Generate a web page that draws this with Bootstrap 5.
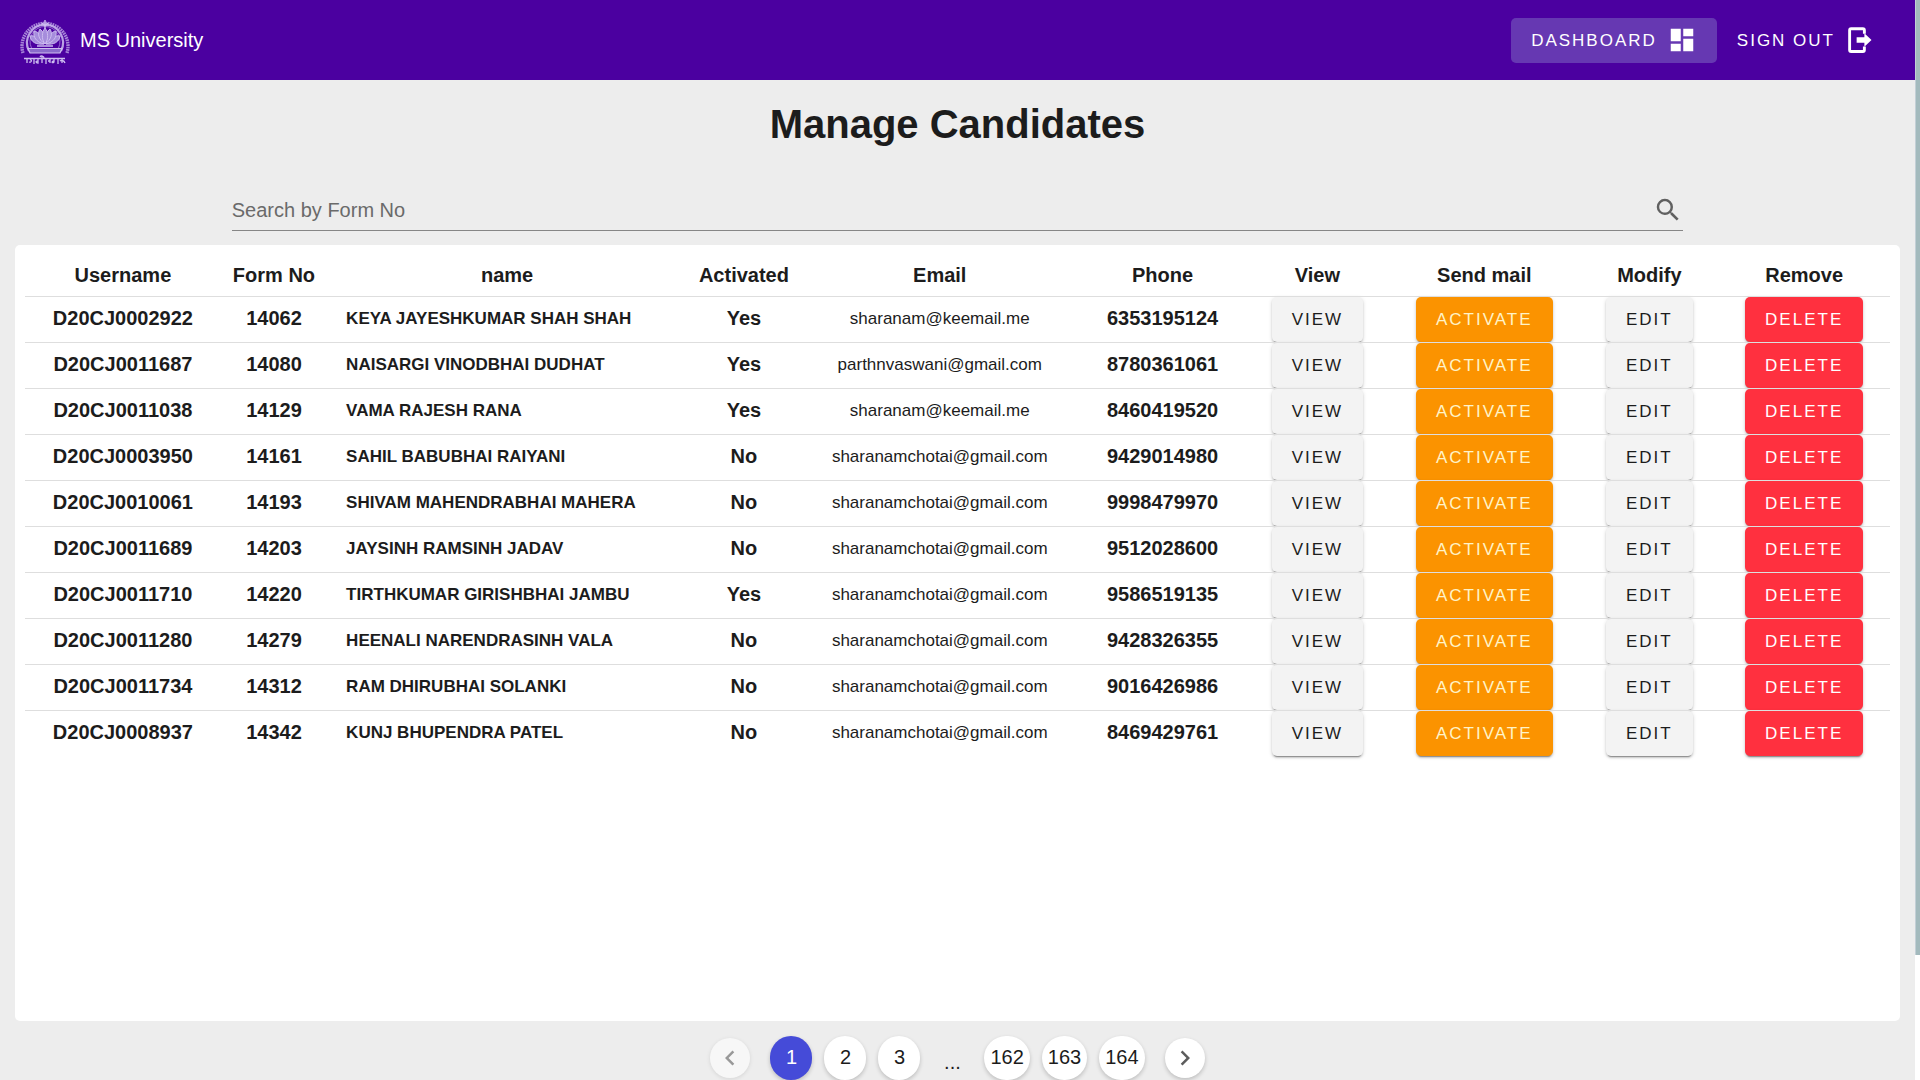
<!DOCTYPE html>
<html lang="en">
<head>
<meta charset="utf-8">
<meta name="viewport" content="width=device-width, initial-scale=1">
<title>Manage Candidates</title>
<link href="https://cdn.jsdelivr.net/npm/bootstrap@5.3.0/dist/css/bootstrap.min.css" rel="stylesheet">
<style>
  body { font-family: "Liberation Sans", Arial, sans-serif; font-size: 20px; color: #1c1c1c; background: #ededed; }
  .page-scroll { height: 100vh; overflow-y: auto; scrollbar-width: none; padding-right: 5px; }
  .page-scroll::-webkit-scrollbar { display: none; }
  .scroll-rail { position: fixed; top: 0; right: 0; width: 5px; height: 100vh; background: #fff; }
  .scroll-thumb { background: #a3babd; border-left: 1px solid #c3cfd6; }
  .topbar { height: 80px; background: #4b00a0; padding: 0 20px; }
  .topbar, .topbar a { color: #fff; }
  .brand-link { gap: 10px; }
  .brand-logo { width: 50px; height: 50px; }
  .mdbtn { height: 45px; padding: 0 20px; border: 0; border-radius: 5px; font-size: 17px; line-height: 45px; letter-spacing: 2px; text-transform: uppercase; }
  .nav-mdbtn { display: inline-flex; align-items: center; gap: 10px; background: transparent; text-decoration: none; }
  .nav-mdbtn svg { width: 30px; height: 30px; }
  .nav-mdbtn.current { background: #6638b2; }
  .page-title { font-size: 40px; line-height: 48px; font-weight: 700; margin: 20px 0 41px; }
  .search-area { padding: 0 15px; }
  .searchbox { width: 77%; height: 42px; margin-bottom: 14px; border-bottom: 1px solid #868686; }
  .searchbox input { border: 0; outline: 0; background: transparent; padding: 0; color: #1c1c1c; }
  .searchbox input::placeholder { color: #6a6a6a; opacity: 1; }
  .searchbox button { width: 30px; height: 30px; padding: 0; color: #606060; }
  .sheet { background: #fff; min-height: 776px; padding: 10px; border-radius: 5px; margin: 0 15px; }
  .candidates { width: 100%; table-layout: fixed; text-align: center; line-height: 24px; }
  .candidates th, .candidates td { padding: 0; white-space: nowrap; }
  .candidates thead th { height: 41px; font-weight: 700; }
  .candidates tbody tr { border-top: 1px solid #dedede; }
  .candidates tbody td { height: 45px; }
  .candidates td.fw-bold { padding-bottom: 2px; }
  .candidates .full-name { font-size: 17px; font-weight: 700; text-align: left; padding-left: 19px; }
  .candidates .mail { font-size: 17px; }
  .candidates .mdbtn { display: block; margin: 0 auto; box-shadow: 0 3px 1px -2px rgba(0,0,0,.3), 0 2px 2px rgba(0,0,0,.14), 0 1px 4px rgba(0,0,0,.14); }
  .mdbtn.plain { background: #f3f3f3; color: #1c1c1c; }
  .mdbtn.orange { background: #fb9300; color: #fff3c8; }
  .mdbtn.red { background: #ff303f; color: #fff; }
  .w-user { width: 10.5%; } .w-form { width: 5.7%; } .w-name { width: 19.3%; } .w-act { width: 6.1%; }
  .w-mail { width: 14.9%; } .w-phone { width: 9%; } .w-view { width: 7.6%; } .w-send { width: 10.3%; }
  .w-mod { width: 7.4%; } .w-rem { width: 9.2%; }
  .pager { gap: 12px; padding: 15px 0 141px; }
  .pager button { min-width: 42px; height: 44px; padding: 0 6px 2px; border: 0; border-radius: 22px; background: #fff; color: #1c1c1c; line-height: 40px; box-shadow: 0 2px 4px rgba(0,0,0,.2); }
  .pager button.active-page { background: #454bd8; color: #fff; }
  .pager button.step { display: flex; align-items: center; justify-content: center; min-width: 40px; height: 40px; padding: 0; }
  .pager button.step:disabled { background: #f7f7f7; box-shadow: 0 1px 4px rgba(0,0,0,.1); }
  .pager .dots { width: 40px; padding-top: 8px; text-align: center; }
</style>
<script src="https://cdn.jsdelivr.net/npm/bootstrap@5.3.0/dist/js/bootstrap.bundle.min.js"></script>
</head>
<body>
<div class="page-scroll">
  <header class="topbar d-flex align-items-center justify-content-between">
    <a href="#" class="brand-link d-flex align-items-center text-decoration-none pe-3">
      <svg class="brand-logo" viewBox="0 0 50 50" fill="none" stroke="#cdbcf0" aria-hidden="true">
        <path d="M3 38A23 23 0 1 1 47 38" stroke-width="3.400" stroke-dasharray="1.700 .7" opacity=".7"/>
        <path d="M9 36A18 18 0 1 1 41 36" stroke-width="2.200" opacity=".85"/>
        <path d="M11.500 33A15 15 0 1 1 38.500 33" stroke-width=".8" opacity=".7"/>
        <path d="M8 33.500H42L40 38H10Z" fill="#8a6ccb" stroke-width="1.200"/>
        <g fill="#a68ddc" stroke-width="1">
          <path d="M24 29C16 30 11 27 10 21C15 20 21 23 24 29ZM26 29C34 30 39 27 40 21C35 20 29 23 26 29Z"/>
          <path d="M24 29C16 27 13 22 14 16C19 17 23 22 24 29ZM26 29C34 27 37 22 36 16C31 17 27 22 26 29Z"/>
          <path d="M25 29C19 25 17 19 20 14C23 16 25 21 25 29ZM25 29C31 25 33 19 30 14C27 16 25 21 25 29Z"/>
          <path d="M25 29C21 24 22 17 25 13C28 17 29 24 25 29Z"/>
        </g>
        <path d="M25 5V13M22 8L25 11L28 8M17 31H33" stroke-width="1.400"/>
        <path d="M4 43.500H45M7 44V48M10 45C12 44 12 48 9 47M14 44V49M18 44V48C16 48 15 46 18 46M22 41V48M20 42C21 40 24 41 24 43M26 44V49M30 44V48M28 46H30M34 44V47C32 49 31 46 34 46M38 44V49M42 44V48M40 46C41 45 44 45 45 48" stroke-width="1.300"/>
      </svg>
      <span>MS University</span>
    </a>
    <nav class="d-flex">
      <a href="#" class="mdbtn nav-mdbtn current">Dashboard
        <svg viewBox="0 0 24 24" fill="#fff" aria-hidden="true"><path d="M3 13h8V3H3v10zm0 8h8v-6H3v6zm10 0h8V11h-8v10zm0-18v6h8V3h-8z"/></svg>
      </a>
      <a href="#" class="mdbtn nav-mdbtn">Sign out
        <svg viewBox="0 0 24 24" fill="none" aria-hidden="true"><path d="M15.500 7V4.200A1.200 1.200 0 0 0 14.300 3H4.900A1.200 1.200 0 0 0 3.700 4.200V20a1.200 1.200 0 0 0 1.200 1.200H14.300A1.200 1.200 0 0 0 15.500 20V17.200" stroke="#fff" stroke-width="2.300"/><path d="M9.300 9.800H15.500V6.600L21.200 12 15.500 17.400V14.200H9.300z" fill="#fff"/></svg>
      </a>
    </nav>
  </header>

  <main>
    <h1 class="page-title text-center">Manage Candidates</h1>
    <div class="search-area">
      <form class="searchbox d-flex align-items-center mx-auto" role="search">
        <input type="text" class="flex-grow-1" placeholder="Search by Form No" aria-label="Search by Form No">
        <button type="button" class="btn border-0 d-flex" aria-label="Search">
          <svg width="30" height="30" viewBox="0 0 24 24" fill="currentColor" aria-hidden="true"><path d="M15.500 14h-.79l-.28-.27A6.470 6.470 0 0 0 16 9.500 6.500 6.500 0 1 0 9.500 16c1.610 0 3.090-.59 4.230-1.570l.27.28v.79l5 4.990L20.490 19l-4.990-5zm-6 0C7.010 14 5 11.990 5 9.500S7.010 5 9.500 5 14 7.010 14 9.500 11.990 14 9.500 14z"/></svg>
        </button>
      </form>
    </div>

    <section class="sheet">
      <table class="candidates">
        <thead>
          <tr>
            <th class="w-user" scope="col">Username</th><th class="w-form" scope="col">Form No</th><th class="w-name" scope="col">name</th><th class="w-act" scope="col">Activated</th><th class="w-mail" scope="col">Email</th><th class="w-phone" scope="col">Phone</th><th class="w-view" scope="col">View</th><th class="w-send" scope="col">Send mail</th><th class="w-mod" scope="col">Modify</th><th class="w-rem" scope="col">Remove</th>
          </tr>
        </thead>
        <tbody id="rows"></tbody>
      </table>
    </section>

    <nav class="pager d-flex justify-content-center align-items-center" aria-label="Pages">
      <button type="button" class="step me-2" disabled aria-label="Previous page"><svg width="30" height="30" viewBox="0 0 24 24" fill="#999" aria-hidden="true"><path d="M15.410 7.410 14 6l-6 6 6 6 1.410-1.410L10.830 12z"/></svg></button>
      <button type="button" class="active-page" aria-current="page">1</button>
      <button type="button">2</button>
      <button type="button">3</button>
      <span class="dots">...</span>
      <button type="button">162</button>
      <button type="button">163</button>
      <button type="button">164</button>
      <button type="button" class="step ms-2" aria-label="Next page"><svg width="30" height="30" viewBox="0 0 24 24" fill="#5c5c5c" aria-hidden="true"><path d="M10 6 8.590 7.410 13.170 12l-4.580 4.590L10 18l6-6z"/></svg></button>
    </nav>
  </main>
</div>
<div class="scroll-rail" aria-hidden="true"><div class="scroll-thumb" id="thumb"></div></div>
<script>
  const candidates = [
    ["D20CJ0002922", "14062", "KEYA JAYESHKUMAR SHAH SHAH", "Yes", "sharanam@keemail.me", "6353195124"],
    ["D20CJ0011687", "14080", "NAISARGI VINODBHAI DUDHAT", "Yes", "parthnvaswani@gmail.com", "8780361061"],
    ["D20CJ0011038", "14129", "VAMA RAJESH RANA", "Yes", "sharanam@keemail.me", "8460419520"],
    ["D20CJ0003950", "14161", "SAHIL BABUBHAI RAIYANI", "No", "sharanamchotai@gmail.com", "9429014980"],
    ["D20CJ0010061", "14193", "SHIVAM MAHENDRABHAI MAHERA", "No", "sharanamchotai@gmail.com", "9998479970"],
    ["D20CJ0011689", "14203", "JAYSINH RAMSINH JADAV", "No", "sharanamchotai@gmail.com", "9512028600"],
    ["D20CJ0011710", "14220", "TIRTHKUMAR GIRISHBHAI JAMBU", "Yes", "sharanamchotai@gmail.com", "9586519135"],
    ["D20CJ0011280", "14279", "HEENALI NARENDRASINH VALA", "No", "sharanamchotai@gmail.com", "9428326355"],
    ["D20CJ0011734", "14312", "RAM DHIRUBHAI SOLANKI", "No", "sharanamchotai@gmail.com", "9016426986"],
    ["D20CJ0008937", "14342", "KUNJ BHUPENDRA PATEL", "No", "sharanamchotai@gmail.com", "8469429761"]
  ];
  document.getElementById("rows").innerHTML = candidates.map(([user, form, name, active, mail, phone]) => `
    <tr>
      <td class="fw-bold">${user}</td><td class="fw-bold">${form}</td><td class="full-name">${name}</td>
      <td class="fw-bold">${active}</td><td class="mail">${mail}</td><td class="fw-bold">${phone}</td>
      <td><button type="button" class="mdbtn plain">View</button></td>
      <td><button type="button" class="mdbtn orange">Activate</button></td>
      <td><button type="button" class="mdbtn plain">Edit</button></td>
      <td><button type="button" class="mdbtn red">Delete</button></td>
    </tr>`).join("");

  // The slim scrollbar: thumb length and place follow the scrolled page.
  const page = document.querySelector(".page-scroll");
  const thumb = document.getElementById("thumb");
  function drawThumb() {
    const ratio = page.clientHeight / page.scrollHeight;
    thumb.style.height = Math.round(page.clientHeight * ratio) + "px";
    thumb.style.marginTop = Math.round(page.scrollTop * ratio) + "px";
  }
  page.addEventListener("scroll", drawThumb);
  window.addEventListener("resize", drawThumb);
  drawThumb();
</script>
</body>
</html>
